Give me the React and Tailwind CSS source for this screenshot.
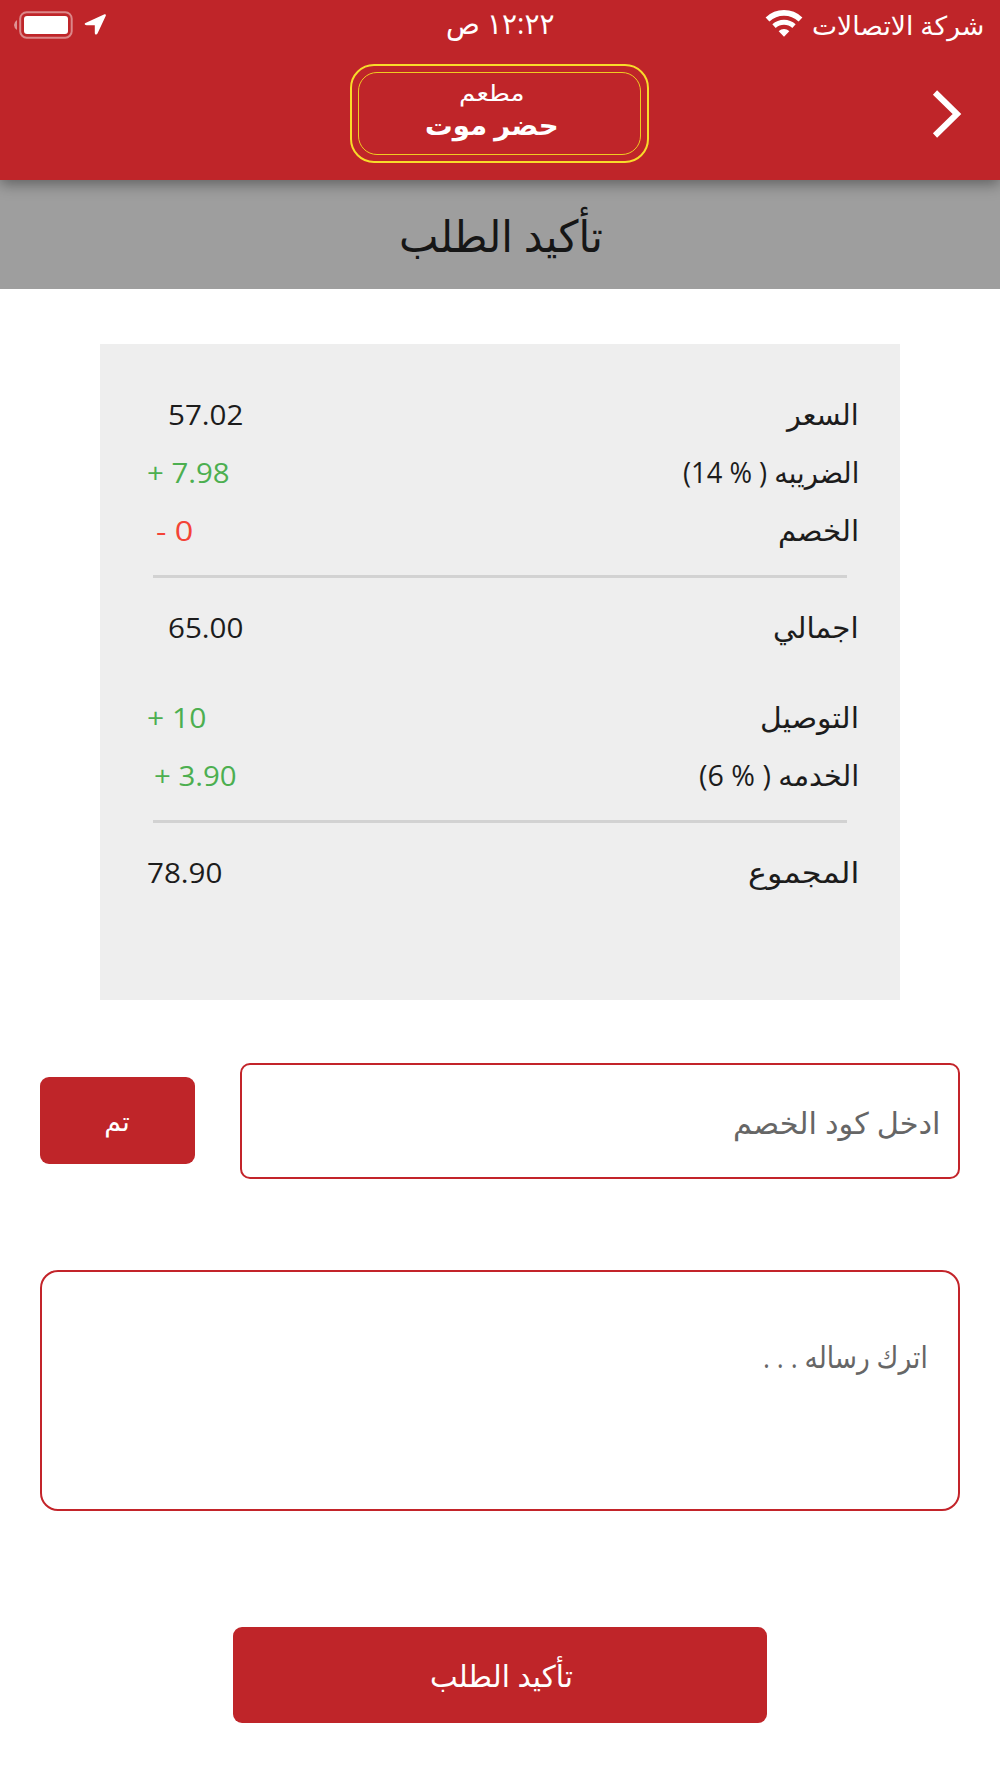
import { useLayoutEffect, useRef, useState } from "react";

const summary = [
  { label: "السعر", labelWidth: 72, value: "57.02", valueWidth: 75, pad: "pl-[68px]", color: "text-[#1c1c1c]" },
  { label: "الضريبه ( % 14)", labelWidth: 176, value: "+ 7.98", valueWidth: 83, pad: "pl-[47px]", color: "text-[#4caf50]" },
  { label: "الخصم", labelWidth: 81, value: "- 0", valueWidth: 37, pad: "pl-[56px]", color: "text-[#f44336]" },
];

const fees = [
  { label: "التوصيل", labelWidth: 99, value: "+ 10", valueWidth: 59, pad: "pl-[47px]", color: "text-[#4caf50]" },
  { label: "الخدمه ( % 6)", labelWidth: 160, value: "+ 3.90", valueWidth: 83, pad: "pl-[54px]", color: "text-[#4caf50]" },
];

const subtotal = { label: "اجمالي", labelWidth: 86, value: "65.00", valueWidth: 75, pad: "pl-[68px]", color: "text-[#1c1c1c]" };
const total = { label: "المجموع", labelWidth: 111, value: "78.90", valueWidth: 75, pad: "pl-[47px]", color: "text-[#1c1c1c]" };

// Squeezes or stretches one line of text to a fixed width
function FitText({ width, dir = "rtl", className = "", children }) {
  const ref = useRef(null);
  const [scale, setScale] = useState(1);

  useLayoutEffect(() => {
    const natural = ref.current.offsetWidth;
    if (natural) setScale(width / natural);
  }, [width, children]);

  return (
    <span dir={dir} className={`flex shrink-0 justify-start ${className}`} style={{ width }}>
      <span
        ref={ref}
        className={`block shrink-0 whitespace-nowrap ${dir === "rtl" ? "origin-right" : "origin-left"}`}
        style={{ transform: `scaleX(${scale})` }}
      >
        {children}
      </span>
    </span>
  );
}

function SummaryRow({ row }) {
  return (
    <div className={`flex h-[58px] items-center justify-between pr-[41px] ${row.pad}`}>
      <FitText width={row.labelWidth} className="text-[29px] leading-[42px] text-[#1c1c1c]">
        {row.label}
      </FitText>
      <FitText width={row.valueWidth} dir="ltr" className={`text-[28px] leading-[42px] ${row.color}`}>
        {row.value}
      </FitText>
    </div>
  );
}

function Divider() {
  return <div className="mx-[53px] mt-[16px] mb-[14px] h-[3px] bg-[#d2d2d2]" />;
}

function StatusBar() {
  return (
    <div className="grid h-[50px] grid-cols-3 items-center pr-[16px] pl-[13px]">
      <div className="flex items-center gap-[9px]">
        <FitText width={172} className="text-[26px]">
          شركة الاتصالات
        </FitText>
        <svg width="38" height="28" viewBox="0 0 38 28" fill="none" className="mb-[2px]">
          <path d="M2.500 9.500C12 .7 26 .7 35.500 9.500" stroke="#fff" strokeWidth="5.600" />
          <path d="M9 16.200C14.800 11 23.200 11 29 16.200" stroke="#fff" strokeWidth="5" />
          <path d="M13.700 21.300C16.800 18.300 21.200 18.300 24.300 21.300L19 26.800Z" fill="#fff" />
        </svg>
      </div>
      <div className="flex justify-center pb-[4px] pl-[3px]">
        <FitText width={109} className="text-[29px]">
          ١٢:٢٢ ص
        </FitText>
      </div>
      <div className="flex items-center justify-end gap-[11px] pb-[1px]">
        <svg width="23" height="23" viewBox="0 0 23 23">
          <path d="M2 9.800L20.500 1.200Q22.500.8 21.800 2.800L13.500 20.500Q12.700 22 11.400 21.400Q10.800 21 10.800 20V12.200H2.600Q.6 12 .6 11Q.8 10.200 2 9.800Z" fill="#fff" />
        </svg>
        <svg width="60" height="28" viewBox="0 0 60 28">
          <path d="M4 9Q1 11 1 14T4 19Z" fill="#fff" fillOpacity=".5" />
          <rect x="7.200" y="1.200" width="51.500" height="25.500" rx="6.500" fill="none" stroke="#fff" strokeOpacity=".45" strokeWidth="2" />
          <rect x="11" y="5" width="44" height="18" rx="3" fill="#fff" />
        </svg>
      </div>
    </div>
  );
}

function Logo() {
  return (
    <div className="h-[99px] w-[299px] rounded-[24px] border-[2.500px] border-[#f8dc2a] p-[6px]">
      <div className="flex h-full flex-col items-center rounded-[19px] border border-[#f0cb22] pr-[16px]">
        <FitText width={66} className="mt-[4px] text-[23px] leading-[30px]">
          مطعم
        </FitText>
        <FitText width={134} className="mt-[1px] text-[27px] leading-[34px] font-bold">
          حضر موت
        </FitText>
      </div>
    </div>
  );
}

export default function App() {
  return (
    <div
      dir="rtl"
      className="flex h-[1778px] w-[1000px] flex-col overflow-hidden bg-white font-['Open_Sans','DejaVu_Sans',sans-serif]"
    >
      <header className="relative z-10 h-[180px] bg-[#bf2529] text-white shadow-[0_4px_14px_rgba(0,0,0,0.4)]">
        <StatusBar />
        <div className="grid grid-cols-3 pt-[14px]">
          <button type="button" aria-label="رجوع" className="flex items-center justify-start pr-[38px]">
            <svg width="30" height="50" viewBox="0 0 30 50" fill="none" className="mt-[1px]">
              <path d="M3 3.500L25 25L3 46.500" stroke="#fff" strokeWidth="6" />
            </svg>
          </button>
          <div className="flex justify-center pr-[1px]">
            <Logo />
          </div>
        </div>
      </header>

      <div className="flex h-[109px] items-center justify-center bg-[#9e9e9e] pl-[1px]">
        <FitText width={204} className="text-[44px] text-[#161616]">
          تأكيد الطلب
        </FitText>
      </div>

      <section className="mx-[100px] mt-[55px] h-[656px] bg-[#eee] pt-[41px]">
        {summary.map((row) => (
          <SummaryRow key={row.label} row={row} />
        ))}
        <Divider />
        <div className="pt-[6px]">
          <SummaryRow row={subtotal} />
        </div>
        <div className="pt-[32px]">
          {fees.map((row) => (
            <SummaryRow key={row.label} row={row} />
          ))}
        </div>
        <Divider />
        <div className="pt-[6px]">
          <SummaryRow row={total} />
        </div>
      </section>

      <div className="mx-[40px] mt-[62.500px] flex items-center justify-between">
        <div className="flex h-[116px] w-[720px] items-center rounded-[10px] border-2 border-[#c3242a] pt-[3px] pr-[17px]">
          <FitText width={208} className="text-[30px] text-[#666]">
            ادخل كود الخصم
          </FitText>
        </div>
        <button type="button" className="flex h-[87px] w-[154.500px] items-center justify-center rounded-[9px] bg-[#bf2529] pt-[1px] text-white">
          <FitText width={25} className="text-[27px]">
            تم
          </FitText>
        </button>
      </div>

      <div className="mx-[40px] mt-[91px] h-[241px] rounded-[18px] border-2 border-[#c3242a] pt-[62px] pr-[30px]">
        <FitText width={165} className="text-[30px] text-[#666]">
          اترك رساله . . .
        </FitText>
      </div>

      <button
        type="button"
        className="mt-[116.500px] flex h-[96px] w-[534px] items-center justify-center self-center rounded-[9px] bg-[#bf2529] pl-[2px] text-white"
      >
        <FitText width={143} className="text-[30px]">
          تأكيد الطلب
        </FitText>
      </button>
    </div>
  );
}
